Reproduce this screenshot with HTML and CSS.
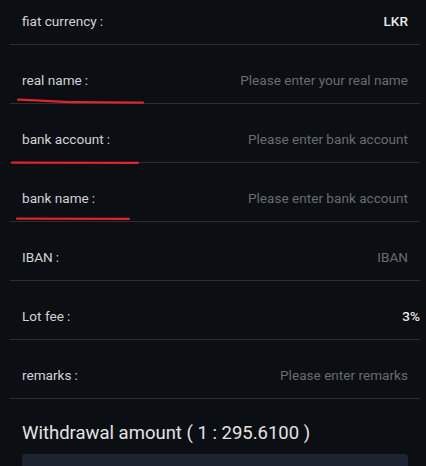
FILE: index.html
```html
<!DOCTYPE html>
<html>
<head>
<meta charset="utf-8">
<link rel="stylesheet" href="styles.css">
</head>
<body>
<div class="page">
  <div class="form">
    <div class="row first"><span class="label">fiat currency<span class="colon">:</span></span><span class="value">LKR</span></div>
    <div class="row"><span class="label">real name<span class="colon">:</span></span><span class="ph">Please enter your real name</span></div>
    <div class="row"><span class="label">bank account<span class="colon">:</span></span><span class="ph">Please enter bank account</span></div>
    <div class="row"><span class="label">bank name<span class="colon">:</span></span><span class="ph">Please enter bank account</span></div>
    <div class="row"><span class="label">IBAN<span class="colon">:</span></span><span class="ph">IBAN</span></div>
    <div class="row"><span class="label">Lot fee<span class="colon">:</span></span><span class="value fee">3%</span></div>
    <div class="row"><span class="label">remarks<span class="colon">:</span></span><span class="ph">Please enter remarks</span></div>
  </div>
  <div class="amount">
    <div class="amount-title">Withdrawal amount ( 1 : 295.6100 )</div>
    <div class="amount-box"></div>
  </div>
  <svg class="marks" width="426" height="466" viewBox="0 0 426 466">
    <path d="M18 99.6 C40 100.2 55 101.8 80 102.2 L143 102.6" stroke="#e0242b" stroke-width="2.2" fill="none" stroke-linecap="round"/>
    <path d="M12 162.6 L138 162.8" stroke="#e0242b" stroke-width="2.2" fill="none" stroke-linecap="round"/>
    <path d="M17 218.6 L129 218.8" stroke="#e0242b" stroke-width="2.2" fill="none" stroke-linecap="round"/>
  </svg>
</div>
</body>
</html>
```
FILE: styles.css
```css
html, body {
  margin: 0;
  padding: 0;
  background: #0b0e12;
}
body {
  font-family: Roboto, "Noto Sans CJK TC", sans-serif;
  overflow: hidden;
}
.page {
  position: relative;
  width: 426px;
  height: 466px;
  overflow: hidden;
}
.form {
  margin: -14px 6px 0 10px;
}
.row {
  display: flex;
  justify-content: space-between;
  align-items: center;
  padding: 12px 12px 0 12px;
  box-sizing: border-box;
  height: 59px;
  border-bottom: 1px solid #2a2f36;
  font-size: 13.6px;
  line-height: 18px;
}
.label {
  color: #d2d3d5;
}
.colon {
  margin-left: 3px;
}
.value {
  color: #e8e8e8;
  font-weight: 500;
}
.fee {
  margin-right: -12px;
}
.ph {
  color: #686c72;
}
.amount {
  padding: 22px 18px 0 22px;
}
.amount-title {
  color: #e2e3e5;
  font-size: 18.5px;
  line-height: 24px;
}
.amount-box {
  margin-top: 9px;
  height: 40px;
  background: #1c2331;
  border-radius: 3px;
}
.marks {
  position: absolute;
  left: 0;
  top: 0;
  pointer-events: none;
}
```
